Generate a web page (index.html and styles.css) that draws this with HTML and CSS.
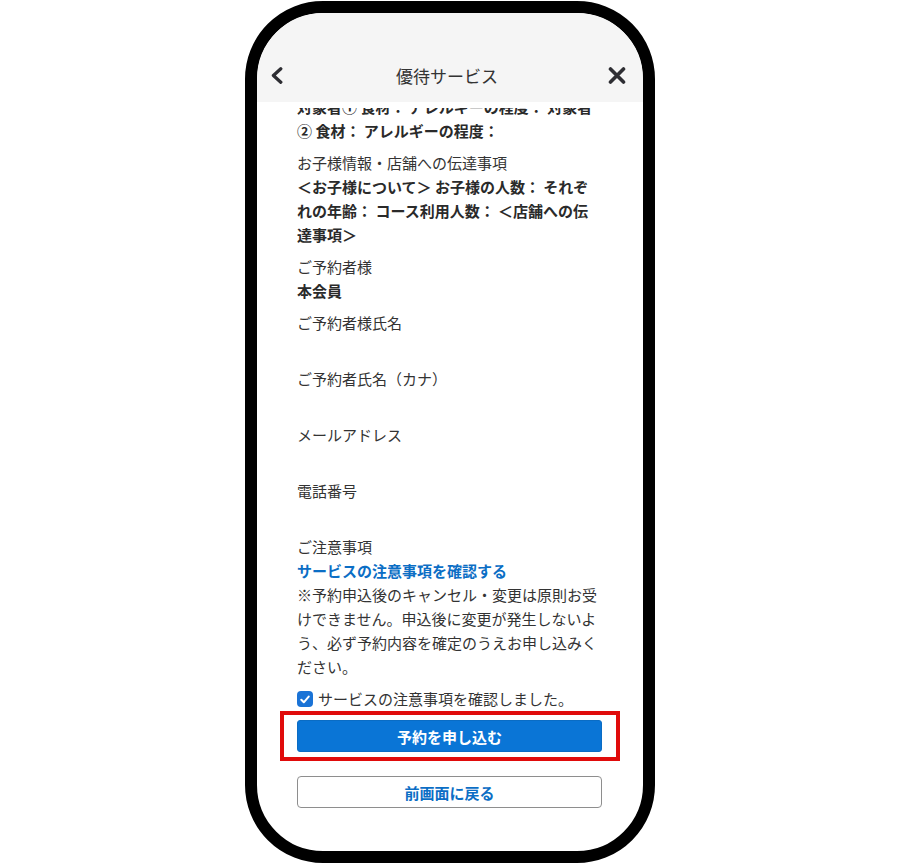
FILE: index.html
```html
<!DOCTYPE html>
<html lang="ja">
<head>
    <meta charset="UTF-8">
    <meta name="viewport" content="width=device-width, initial-scale=1.0">
    <title>優待サービス</title>
    <link rel="stylesheet" href="styles.css">
</head>
<body>
    <div class="phone">
        <div class="screen">
            <header class="topbar">
                <div class="nav">
                    <button class="nav-btn" type="button" aria-label="戻る">
                        <svg width="12" height="17" viewBox="0 0 12 17"><polyline points="9.8,1.8 2.4,8.5 9.8,15.2" fill="none" stroke="currentColor" stroke-width="3.3" stroke-linecap="round" stroke-linejoin="round"/></svg>
                    </button>
                    <h1 class="title">優待サービス</h1>
                    <button class="nav-btn" type="button" aria-label="閉じる">
                        <svg width="18" height="17" viewBox="0 0 18 17"><path d="M2.5 2 L15.5 15 M15.5 2 L2.5 15" fill="none" stroke="currentColor" stroke-width="3.6" stroke-linecap="round"/></svg>
                    </button>
                </div>
            </header>

            <main class="content">
                <div class="scroll">
                    <div class="field first">
                        <p class="value">対象者① 食材： アレルギーの程度： 対象者② 食材： アレルギーの程度：</p>
                    </div>
                    <div class="field">
                        <p class="label">お子様情報・店舗への伝達事項</p>
                        <p class="value">＜お子様について＞ お子様の人数： それぞれの年齢： コース利用人数： ＜店舗への伝達事項＞</p>
                    </div>
                    <div class="field">
                        <p class="label">ご予約者様</p>
                        <p class="value">本会員</p>
                    </div>
                    <div class="field">
                        <p class="label">ご予約者様氏名</p>
                        <p class="value"></p>
                    </div>
                    <div class="field">
                        <p class="label">ご予約者氏名（カナ）</p>
                        <p class="value"></p>
                    </div>
                    <div class="field">
                        <p class="label">メールアドレス</p>
                        <p class="value"></p>
                    </div>
                    <div class="field">
                        <p class="label">電話番号</p>
                        <p class="value"></p>
                    </div>
                    <div class="field">
                        <p class="label">ご注意事項</p>
                        <a class="link" href="#">サービスの注意事項を確認する</a>
                        <p class="notice">※予約申込後のキャンセル・変更は原則お受けできません。申込後に変更が発生しないよう、必ず予約内容を確定のうえお申し込みください。</p>
                    </div>

                    <label class="agree">
                        <input type="checkbox" checked>
                        <span class="box">
                            <svg width="10" height="9" viewBox="0 0 10 9"><polyline points="1.3,4.8 3.8,7.3 8.7,1.6" fill="none" stroke="#fff" stroke-width="2" stroke-linecap="round" stroke-linejoin="round"/></svg>
                        </span>
                        サービスの注意事項を確認しました。
                    </label>

                    <div class="highlight">
                        <button class="btn-primary" type="button">予約を申し込む</button>
                    </div>
                    <button class="btn-secondary" type="button">前画面に戻る</button>
                </div>
            </main>
        </div>
    </div>
</body>
</html>
```

FILE: styles.css
```css
* {
    box-sizing: border-box;
}
body {
    margin: 0;
    background-color: #fff;
    font-family: "Noto Sans CJK JP", "Noto Sans", sans-serif;
    color: #333;
}
p {
    margin: 0;
}

.phone {
    width: 410px;
    height: 862px;
    margin: 1px auto 0;
    border: 12px solid #000;
    border-radius: 78px;
    background-color: #fff;
    overflow: hidden;
}
.screen {
    height: 100%;
    display: flex;
    flex-direction: column;
    border-radius: 66px;
    overflow: hidden;
}

/* header */
.topbar {
    flex: none;
    height: 89px;
    padding-top: 49px;
    background-color: #f5f5f5;
}
.nav {
    height: 26px;
    display: flex;
    align-items: center;
    justify-content: space-between;
    padding: 0 15px 0 9px;
}
.nav-btn {
    width: 22px;
    height: 22px;
    padding: 0;
    border: none;
    background: none;
    color: #2e2e33;
    display: flex;
    align-items: center;
    justify-content: center;
}
.title {
    margin: 0;
    font-size: 17px;
    font-weight: 400;
    color: #333;
}

/* body: the list is scrolled, so the first row sits half under the header */
.content {
    flex: 1;
    display: flex;
    flex-direction: column;
    padding-top: 6px;
}
.scroll {
    flex: 1;
    overflow: hidden;
    padding: 0 41px 0 40px;
    font-size: 15px;
    line-height: 24px;
}
.field {
    margin-bottom: 8px;
}
.field.first {
    margin-top: -13px;
}
.label {
    color: #333;
}
.value {
    min-height: 24px;
    font-weight: 700;
    color: #2a2a2a;
}
.link {
    display: block;
    color: #0b6ec5;
    font-weight: 700;
    text-decoration: none;
}
.notice {
    color: #333;
}

.agree {
    display: flex;
    align-items: center;
    gap: 5px;
    margin-top: 7px;
    height: 24px;
    color: #333;
}
.agree input {
    display: none;
}
.box {
    width: 16px;
    height: 16px;
    border-radius: 4px;
    background-color: #1a73d6;
    display: flex;
    align-items: center;
    justify-content: center;
}

.highlight {
    margin: 0 -18px 0 -17px;
    padding: 5px 14px 5px 13px;
    border: 4px solid #e00b0b;
}
.btn-primary,
.btn-secondary {
    display: block;
    width: 100%;
    height: 32px;
    font-family: inherit;
    font-size: 15px;
    font-weight: 700;
    cursor: pointer;
}
.btn-primary {
    border: 1px solid #0a6cc4;
    border-radius: 3px;
    background-color: #0a75d6;
    color: #fff;
}
.btn-secondary {
    margin-top: 15px;
    border: 1px solid #8e8e8e;
    border-radius: 4px;
    background-color: #fff;
    color: #0b6ec5;
}
```
